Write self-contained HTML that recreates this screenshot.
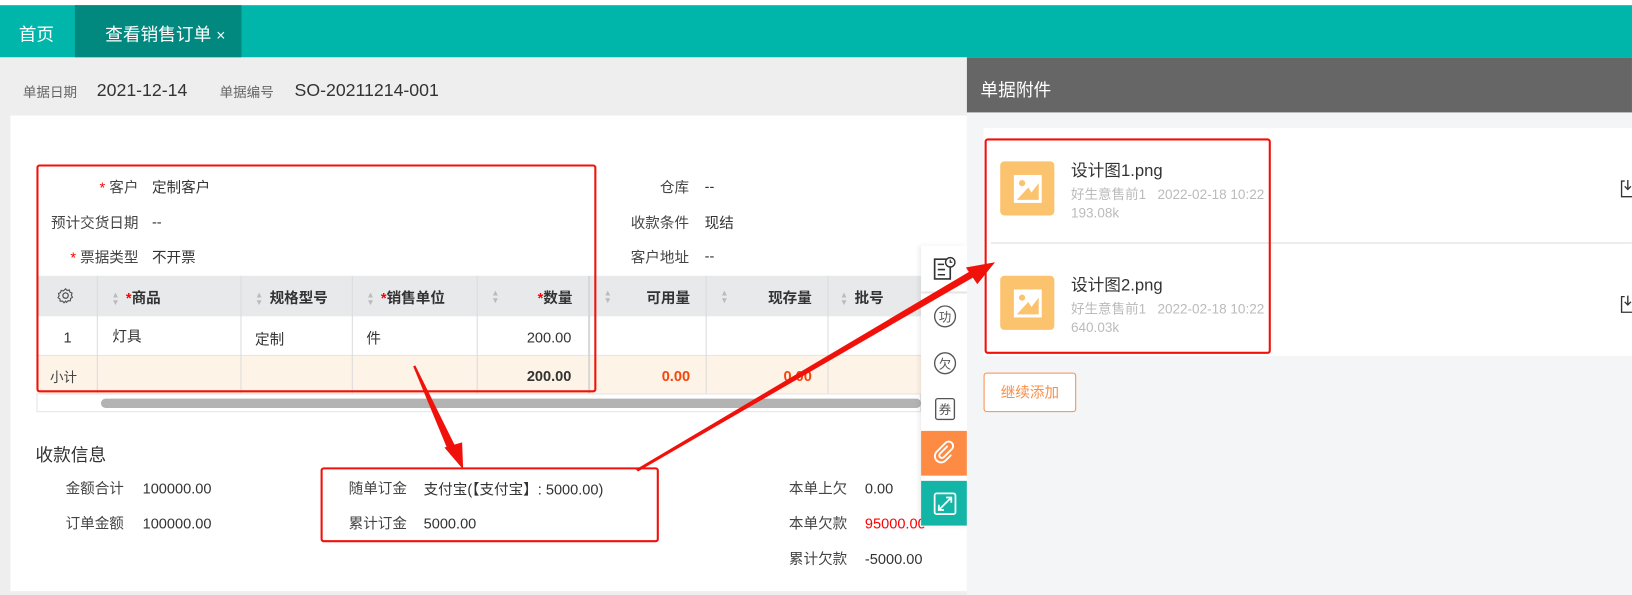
<!DOCTYPE html>
<html><head><meta charset="utf-8">
<style>
*{margin:0;padding:0;box-sizing:border-box}
html,body{width:1632px;height:595px;overflow:hidden;background:#fff}
body{font-family:"Liberation Sans","Noto Sans CJK SC",sans-serif;color:#333}
#w{position:absolute;left:0;top:0;width:1568px;height:572px;transform:scale(1.0408);transform-origin:0 0;background:#eee}
.a{position:absolute;white-space:nowrap}
.t{font-size:14px;color:#333}
.n{font-size:14px;color:#333;margin-top:2px}
.l{font-size:14px;color:#444}
.r{color:#f00}
.col{position:absolute;top:0;height:100%;border-left:1px solid #dcdcdc}
.box{position:absolute;border:2px solid #f0120a;border-radius:3px}
.sort{display:inline-block;width:8px;margin-right:6px;vertical-align:middle;color:#bbb;font-size:8px;line-height:7px}
</style></head><body>
<div id="w">
<div class="a" style="left:0;top:0;width:1568px;height:5px;background:#fff"></div>
<div class="a" style="left:0;top:5px;width:1568px;height:50px;background:#00b5aa"></div>
<div class="a" style="left:18px;top:19px;font-size:17px;color:#fff">首页</div>
<div class="a" style="left:72px;top:5px;width:160px;height:50px;background:#02897f"></div>
<div class="a" style="left:101px;top:19px;font-size:17px;color:#fff">查看销售订单 <span style="font-size:15px">×</span></div>

<div class="a" style="left:22px;top:78px;font-size:13px;color:#666">单据日期</div>
<div class="a" style="left:93px;top:77px;font-size:17px;color:#333">2021-12-14</div>
<div class="a" style="left:211px;top:78px;font-size:13px;color:#666">单据编号</div>
<div class="a" style="left:283px;top:77px;font-size:17px;color:#333">SO-20211214-001</div>

<div class="a" style="left:10px;top:111px;width:919px;height:457px;background:#fff"></div>

<div class="a l" style="right:1435px;top:170px"><span class="r">*</span> 客户</div>
<div class="a t" style="left:146px;top:170px">定制客户</div>
<div class="a l" style="right:1435px;top:204px">预计交货日期</div>
<div class="a t" style="left:146px;top:205px">--</div>
<div class="a l" style="right:1435px;top:237px"><span class="r">*</span> 票据类型</div>
<div class="a t" style="left:146px;top:237px">不开票</div>
<div class="a l" style="right:906px;top:170px">仓库</div>
<div class="a t" style="left:677px;top:171px">--</div>
<div class="a l" style="right:906px;top:204px">收款条件</div>
<div class="a t" style="left:677px;top:204px">现结</div>
<div class="a l" style="right:906px;top:237px">客户地址</div>
<div class="a t" style="left:677px;top:238px">--</div>

<div class="a" style="left:35px;top:265px;width:850px;height:39px;background:#e8e9eb"></div>
<div class="a" style="left:35px;top:304px;width:850px;height:38px;background:#fff;border-bottom:1px solid #e4e4e4"></div>
<div class="a" style="left:35px;top:342px;width:850px;height:36px;background:#fdf3e6"></div>
<div class="a" style="left:35px;top:378px;width:850px;height:18px;background:#fff;border:1px solid #e4e4e4"></div>
<div class="a" style="left:97px;top:383px;width:788px;height:9px;background:#b3b3b3;border-radius:5px"></div>
<div class="a" style="left:35px;top:265px;width:850px;height:113px">
<div class="col" style="left:58px"></div><div class="col" style="left:196px"></div><div class="col" style="left:303px"></div><div class="col" style="left:423px"></div><div class="col" style="left:530px;border-left:2px solid #d8d8d8"></div><div class="col" style="left:643px"></div><div class="col" style="left:760px"></div>
</div>
<svg class="a" style="left:55px;top:276px" width="16" height="16" viewBox="0 0 16 16"><circle cx="8" cy="8" r="2.6" fill="none" stroke="#555" stroke-width="1.2"/><path d="M8 1.5l1.5 1.6 2.1-.5.6 2.1 2 .9-.6 2.1 1 1.9-1.8 1.2-.2 2.2-2.2-.1-1.5 1.6L8 13.3l-1.5 1.6-1.5-1.6-2.2.1-.2-2.2L.8 10l1-1.9-.6-2.1 2-.9.6-2.1 2.1.5z" fill="none" stroke="#555" stroke-width="1.1"/></svg>
<div class="a" style="left:107px;top:276px;font-size:14px;font-weight:bold;color:#333"><span class="sort">▲<br>▼</span><span class="r">*</span>商品</div>
<div class="a" style="left:245px;top:276px;font-size:14px;font-weight:bold;color:#333"><span class="sort">▲<br>▼</span>规格型号</div>
<div class="a" style="left:352px;top:276px;font-size:14px;font-weight:bold;color:#333"><span class="sort">▲<br>▼</span><span class="r">*</span>销售单位</div>
<div class="a" style="left:472px;top:276px;font-size:14px;font-weight:bold;color:#333"><span class="sort">▲<br>▼</span></div>
<div class="a" style="right:1018px;top:276px;font-size:14px;font-weight:bold;color:#333"><span class="r">*</span>数量</div>
<div class="a" style="left:580px;top:276px;font-size:14px;color:#333"><span class="sort">▲<br>▼</span></div>
<div class="a" style="right:905px;top:276px;font-size:14px;font-weight:bold;color:#333">可用量</div>
<div class="a" style="left:692px;top:276px;font-size:14px;color:#333"><span class="sort">▲<br>▼</span></div>
<div class="a" style="right:788px;top:276px;font-size:14px;font-weight:bold;color:#333">现存量</div>
<div class="a" style="left:807px;top:276px;font-size:14px;font-weight:bold;color:#333"><span class="sort">▲<br>▼</span>批号</div>
<div class="a t" style="left:61px;top:316px">1</div>
<div class="a t" style="left:108px;top:313px">灯具</div>
<div class="a t" style="left:245px;top:316px">定制</div>
<div class="a t" style="left:352px;top:315px">件</div>
<div class="a t" style="right:1019px;top:316px">200.00</div>
<div class="a l" style="left:48px;top:352px;font-size:13px">小计</div>
<div class="a" style="right:1019px;top:353px;font-size:14px;font-weight:bold">200.00</div>
<div class="a" style="right:905px;top:353px;font-size:14px;font-weight:bold;color:#f5460a">0.00</div>
<div class="a" style="right:788px;top:353px;font-size:14px;font-weight:bold;color:#f5460a">0.00</div>

<div class="a" style="left:34px;top:423px;font-size:17px;color:#333">收款信息</div>
<div class="a l" style="left:63px;top:459px">金额合计</div><div class="a n" style="left:137px;top:459px">100000.00</div>
<div class="a l" style="left:63px;top:493px">订单金额</div><div class="a n" style="left:137px;top:493px">100000.00</div>
<div class="a l" style="left:335px;top:459px">随单订金</div><div class="a t" style="left:407px;top:460px">支付宝(【支付宝】: 5000.00)</div>
<div class="a l" style="left:335px;top:493px">累计订金</div><div class="a n" style="left:407px;top:493px">5000.00</div>
<div class="a l" style="left:758px;top:459px">本单上欠</div><div class="a n" style="left:831px;top:459px">0.00</div>
<div class="a l" style="left:758px;top:493px">本单欠款</div><div class="a n" style="left:831px;top:493px;color:#f00">95000.00</div>
<div class="a l" style="left:758px;top:527px">累计欠款</div><div class="a n" style="left:831px;top:527px">-5000.00</div>

<div class="a" style="left:885px;top:236px;width:44px;height:270px;background:#fff;box-shadow:-2px 0 4px rgba(0,0,0,.08)"></div>
<div class="a" style="left:885px;top:280px;width:44px;height:2px;background:#e6e6e6"></div>
<svg class="a" style="left:895px;top:245px" width="24" height="26" viewBox="0 0 24 26"><path d="M15 4H3v19h15V12" fill="none" stroke="#333" stroke-width="1.6"/><path d="M6 9h6M6 14h7M6 19h7" stroke="#333" stroke-width="1.5"/><circle cx="18" cy="7" r="4.5" fill="#fff" stroke="#333" stroke-width="1.4"/><path d="M18 4.5V7h2" fill="none" stroke="#333" stroke-width="1.2"/></svg>
<svg class="a" style="left:896px;top:292px" width="24" height="24"><circle cx="12" cy="12" r="10" fill="none" stroke="#555" stroke-width="1.3"/><text x="12" y="17" font-size="12" text-anchor="middle" fill="#555" font-family="Noto Sans CJK SC">功</text></svg>
<svg class="a" style="left:896px;top:337px" width="24" height="24"><circle cx="12" cy="12" r="10" fill="none" stroke="#555" stroke-width="1.3"/><text x="12" y="17" font-size="12" text-anchor="middle" fill="#555" font-family="Noto Sans CJK SC">欠</text></svg>
<svg class="a" style="left:897px;top:381px" width="22" height="24"><rect x="2" y="2" width="18" height="20" rx="2" fill="none" stroke="#555" stroke-width="1.3"/><text x="11" y="17" font-size="12" text-anchor="middle" fill="#555" font-family="Noto Sans CJK SC">券</text></svg>
<div class="a" style="left:885px;top:414px;width:44px;height:43px;background:#fd8b44"></div>
<svg class="a" style="left:895px;top:423px" width="24" height="24" viewBox="0 0 24 24"><path d="M15 6l-7 7a2.5 2.5 0 0 0 3.5 3.5l8-8a4.2 4.2 0 0 0-6-6l-8.5 8.5a6 6 0 0 0 8.5 8.5l5-5" fill="none" stroke="#fff" stroke-width="1.8" stroke-linecap="round"/></svg>
<div class="a" style="left:885px;top:462px;width:44px;height:43px;background:#13b5a7"></div>
<svg class="a" style="left:896px;top:472px" width="24" height="24" viewBox="0 0 24 24"><rect x="2" y="2" width="20" height="20" rx="2" fill="none" stroke="#fff" stroke-width="1.7"/><path d="M13 6h5v5M18 6l-6 6M11 18H6v-5M6 18l6-6" fill="none" stroke="#fff" stroke-width="1.7"/></svg>

<div class="a" style="left:929px;top:55px;width:639px;height:517px;background:#f4f5f7"></div>
<div class="a" style="left:929px;top:55px;width:639px;height:53px;background:#666"></div>
<div class="a" style="left:942px;top:72px;font-size:17px;color:#fff">单据附件</div>
<div class="a" style="left:945px;top:123px;width:623px;height:219px;background:#fff"></div>
<div class="a" style="left:952px;top:233px;width:616px;height:1px;background:#ddd"></div>
<div class="a" style="left:961px;top:155px;width:52px;height:52px;background:#fbc36e;border-radius:4px"></div>
<div class="a" style="left:961px;top:265px;width:52px;height:52px;background:#fbc36e;border-radius:4px"></div>
<svg class="a" style="left:974px;top:168px" width="27" height="27"><rect x="0" y="0" width="27" height="27" fill="#fff"/><circle cx="8" cy="8" r="3" fill="#fbc36e"/><path d="M3 24L14 12l3 5 7-9v16z" fill="#fbc36e"/></svg>
<svg class="a" style="left:974px;top:278px" width="27" height="27"><rect x="0" y="0" width="27" height="27" fill="#fff"/><circle cx="8" cy="8" r="3" fill="#fbc36e"/><path d="M3 24L14 12l3 5 7-9v16z" fill="#fbc36e"/></svg>
<div class="a" style="left:1029px;top:150px;font-size:16px;color:#333">设计图1.png</div>
<div class="a" style="left:1029px;top:176px;font-size:13px;color:#bbb">好生意售前1&nbsp;&nbsp;&nbsp;2022-02-18 10:22</div>
<div class="a" style="left:1029px;top:197px;font-size:13px;color:#bbb">193.08k</div>
<div class="a" style="left:1029px;top:260px;font-size:16px;color:#333">设计图2.png</div>
<div class="a" style="left:1029px;top:286px;font-size:13px;color:#bbb">好生意售前1&nbsp;&nbsp;&nbsp;2022-02-18 10:22</div>
<div class="a" style="left:1029px;top:307px;font-size:13px;color:#bbb">640.03k</div>
<svg class="a" style="left:1557px;top:172px" width="11" height="18"><path d="M4 2H1v15h10M7 1v9M4 7l3 3 3-3" fill="none" stroke="#333" stroke-width="1.3"/></svg>
<svg class="a" style="left:1557px;top:283px" width="11" height="18"><path d="M4 2H1v15h10M7 1v9M4 7l3 3 3-3" fill="none" stroke="#333" stroke-width="1.3"/></svg>
<div class="a" style="left:945px;top:358px;width:89px;height:38px;border:1px solid #f98e4a;border-radius:3px;background:#fff;color:#f98e4a;font-size:14px;text-align:center;line-height:36px">继续添加</div>

<div class="box" style="left:35px;top:158px;width:538px;height:219px"></div>
<div class="box" style="left:308px;top:449px;width:325px;height:72px"></div>
<div class="box" style="left:946px;top:133px;width:275px;height:207px"></div>
<svg class="a" style="left:0;top:0" width="1568" height="572">
<polygon points="397,352 399,351 439,432 431,434" fill="#f0120a"/>
<polygon points="445,451 427,430 444,425" fill="#f0120a"/>
<polygon points="611,451 613,453 936,266 933,260" fill="#f0120a"/>
<polygon points="956,252 928,257 939,273" fill="#f0120a"/>
</svg>
</div>
</body></html>
